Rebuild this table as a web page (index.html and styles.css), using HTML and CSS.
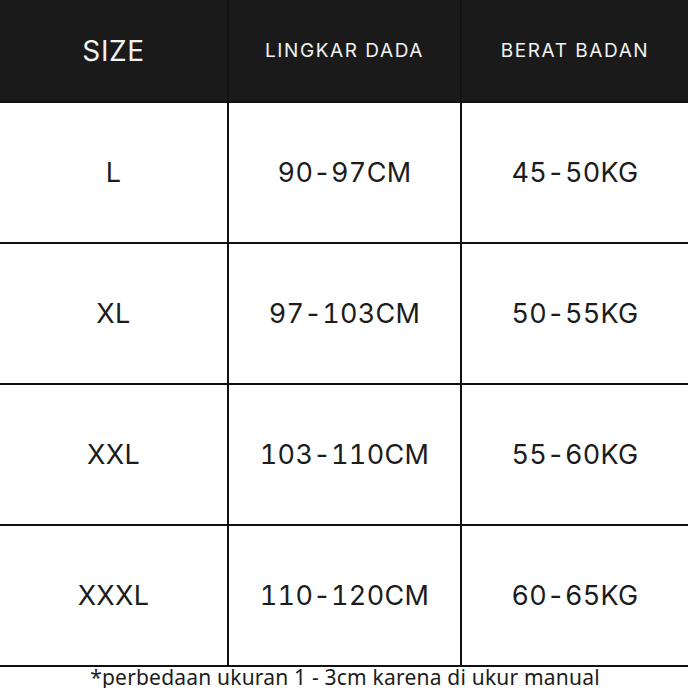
FILE: index.html
```html
<!DOCTYPE html>
<html>
<head>
<meta charset="utf-8">
<link rel="stylesheet" href="styles.css">
</head>
<body>
<div class="page">
  <div class="table">
    <div class="cell head big">SIZE</div>
    <div class="cell head">LINGKAR DADA</div>
    <div class="cell head">BERAT BADAN</div>

    <div class="cell">L</div>
    <div class="cell">90-97CM</div>
    <div class="cell">45-50KG</div>

    <div class="cell">XL</div>
    <div class="cell">97-103CM</div>
    <div class="cell">50-55KG</div>

    <div class="cell">XXL</div>
    <div class="cell">103-110CM</div>
    <div class="cell">55-60KG</div>

    <div class="cell">XXXL</div>
    <div class="cell">110-120CM</div>
    <div class="cell">60-65KG</div>
  </div>
  <div class="note">*perbedaan ukuran 1 - 3cm karena di ukur manual</div>
</div>
</body>
</html>
```

FILE: styles.css
```css
html, body {
  margin: 0;
  padding: 0;
  background: #ffffff;
}
.page {
  width: 688px;
  height: 688px;
  overflow: hidden;
  font-family: "Inter", "Noto Sans", sans-serif;
}
.table {
  display: grid;
  grid-template-columns: 227px 231px 226px;
  grid-template-rows: 101px 139px 139px 139px 139px;
  column-gap: 2px;
  row-gap: 2px;
  background: #111111;
  padding-bottom: 2px;
}
.cell {
  background: #ffffff;
  color: #1c1c1c;
  display: flex;
  align-items: center;
  justify-content: center;
  font-size: 27px;
  font-weight: 400;
  font-variant-numeric: tabular-nums;
  letter-spacing: 0.3px;
}
.head {
  background: #1a1a1a;
  color: #f2f2f2;
  font-size: 19px;
  letter-spacing: 1.6px;
}
.head.big {
  font-size: 28px;
  letter-spacing: 0.6px;
}
.note {
  text-align: center;
  font-family: "Noto Sans", "Open Sans", sans-serif;
  font-size: 21px;
  line-height: 21px;
  letter-spacing: 0.2px;
  color: #1c1c1c;
  margin-top: 0;
  padding-left: 2px;
}
```
